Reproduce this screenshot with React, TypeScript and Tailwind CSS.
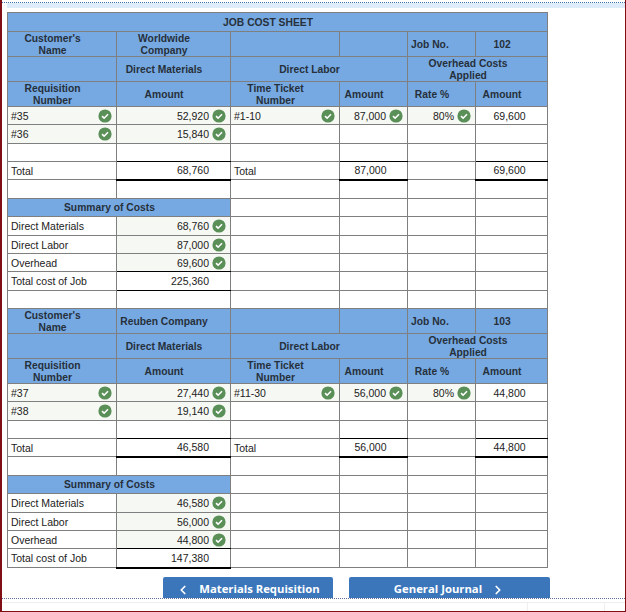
import { ChevronLeft, ChevronRight } from 'lucide-react';

const line = 'border border-[#7f7f7f]';
const head = `${line} bg-[#76a9e2] text-center text-[10.3px] leading-[11.5px] font-bold text-[#26303b] align-middle p-0 pt-[1px] pr-[19px]`;
const cell = `${line} text-[10.5px] leading-[12px] text-[#222] align-middle p-0`;
const tinted = 'bg-[#f6f8f3]';

function Check() {
  return (
    <svg width="14" height="14" viewBox="0 0 14 14" className="shrink-0">
      <circle cx="7" cy="7" r="6.6" fill="#5a8f58" />
      <path d="M4 7.2l2.1 2 3.9-3.9" fill="none" stroke="#fff" strokeWidth="1.6" />
    </svg>
  );
}

function Num({ v, ok, cls = '' }: { v?: string; ok?: boolean; cls?: string }) {
  return (
    <td className={`${cell} ${ok ? tinted : ''} ${cls}`}>
      <div className="flex items-center justify-end gap-[3px] pr-[4px]">
        <span>{v}</span>
        {ok ? <Check /> : <span className="w-[14px]" />}
      </div>
    </td>
  );
}

function Label({ v, ok }: { v?: string; ok?: boolean }) {
  return (
    <td className={`${cell} ${ok ? tinted : ''}`}>
      <div className="flex items-center justify-between pl-[3px] pr-[4px]">
        <span>{v}</span>
        {ok && <Check />}
      </div>
    </td>
  );
}

function Text({ v }: { v?: string }) {
  return <td className={`${cell} pl-[3px]`}>{v}</td>;
}

// in a collapsed table the upper cell wins a tie, so the 1px black rule sits on the row above
const ruleAbove = 'border-b-black';
const thick = 'border-b-2 border-b-black';

type Job = {
  company: string;
  jobNo: string;
  reqs: [string, string][];
  matTotal: string;
  ticket: string;
  labor: string;
  overhead: string;
  summaryTotal: string;
  spacer: boolean;
};

function JobRows({ job }: { job: Job }) {
  return (
    <>
      <tr className="h-[25px]">
        <td className={head}>
          Customer's
          <br />
          Name
        </td>
        <td className={head}>{job.company}</td>
        <td className={head} />
        <td className={head} />
        <td className={`${head} text-left pl-[3px]`}>Job No.</td>
        <td className={head}>{job.jobNo}</td>
      </tr>
      <tr className="h-[25px]">
        <td className={head} />
        <td className={head}>Direct Materials</td>
        <td className={head} colSpan={2}>
          Direct Labor
        </td>
        <td className={head} colSpan={2}>
          Overhead Costs
          <br />
          Applied
        </td>
      </tr>
      <tr className="h-[25px]">
        <td className={head}>
          Requisition
          <br />
          Number
        </td>
        <td className={head}>Amount</td>
        <td className={head}>
          Time Ticket
          <br />
          Number
        </td>
        <td className={head}>Amount</td>
        <td className={head}>Rate %</td>
        <td className={head}>Amount</td>
      </tr>
      <tr className="h-[18px]">
        <Label v={job.reqs[0][0]} ok />
        <Num v={job.reqs[0][1]} ok />
        <Label v={job.ticket} ok />
        <Num v={job.labor} ok />
        <Num v="80%" ok />
        <td className={`${cell} text-center pr-[4px]`}>{job.overhead}</td>
      </tr>
      <tr className="h-[19px]">
        <Label v={job.reqs[1][0]} ok />
        <Num v={job.reqs[1][1]} ok />
        <td className={cell} />
        <td className={cell} />
        <td className={cell} />
        <td className={cell} />
      </tr>
      <tr className="h-[18px]">
        <td className={cell} />
        <td className={`${cell} ${ruleAbove}`} />
        <td className={cell} />
        <td className={`${cell} ${ruleAbove}`} />
        <td className={cell} />
        <td className={`${cell} ${ruleAbove}`} />
      </tr>
      <tr className="h-[18px]">
        <Text v="Total" />
        <Num v={job.matTotal} cls={thick} />
        <Text v="Total" />
        <td className={`${cell} ${thick} text-center pr-[6px]`}>{job.labor}</td>
        <td className={cell} />
        <td className={`${cell} ${thick} text-center pr-[4px]`}>{job.overhead}</td>
      </tr>
      <tr className="h-[19px]">
        {Array.from({ length: 6 }).map((_, i) => (
          <td key={i} className={cell} />
        ))}
      </tr>
      <tr className="h-[18px]">
        <td className={head} colSpan={2}>
          Summary of Costs
        </td>
        <td className={cell} />
        <td className={cell} />
        <td className={cell} />
        <td className={cell} />
      </tr>
      {[
        ['Direct Materials', job.matTotal, 'h-[19px]', ''],
        ['Direct Labor', job.labor, 'h-[18px]', ''],
        ['Overhead', job.overhead, 'h-[18px]', ruleAbove],
      ].map(([label, value, h, rule]) => (
        <tr key={label} className={h}>
          <Text v={label} />
          <Num v={value} ok cls={rule} />
          <td className={cell} />
          <td className={cell} />
          <td className={cell} />
          <td className={cell} />
        </tr>
      ))}
      <tr className="h-[19px]">
        <Text v="Total cost of Job" />
        <Num v={job.summaryTotal} cls={job.spacer ? ruleAbove : thick} />
        <td className={cell} />
        <td className={cell} />
        <td className={cell} />
        <td className={cell} />
      </tr>
      {job.spacer && (
        <tr className="h-[18px]">
          {Array.from({ length: 6 }).map((_, i) => (
            <td key={i} className={cell} />
          ))}
        </tr>
      )}
    </>
  );
}

const jobs: Job[] = [
  {
    company: 'Worldwide Company',
    jobNo: '102',
    reqs: [
      ['#35', '52,920'],
      ['#36', '15,840'],
    ],
    matTotal: '68,760',
    ticket: '#1-10',
    labor: '87,000',
    overhead: '69,600',
    summaryTotal: '225,360',
    spacer: true,
  },
  {
    company: 'Reuben Company',
    jobNo: '103',
    reqs: [
      ['#37', '27,440'],
      ['#38', '19,140'],
    ],
    matTotal: '46,580',
    ticket: '#11-30',
    labor: '56,000',
    overhead: '44,800',
    summaryTotal: '147,380',
    spacer: false,
  },
];

export default function App() {
  return (
    <div className="w-[626px] h-[612px] overflow-hidden bg-white border-l-2 border-r border-b border-[#7f0f14] font-['Liberation_Sans',Arial,sans-serif] flex flex-col">
      <div className="h-[3px] border-b border-dotted border-[#3f6fb0]" />
      <div className="h-[5px] ml-[5px] bg-[#deedf9]" />
      <div className="pl-[5px] pt-[4px]">
        <table className="w-[540px] table-fixed border-collapse">
          <colgroup>
            <col className="w-[109px]" />
            <col className="w-[114px]" />
            <col className="w-[109px]" />
            <col className="w-[68px]" />
            <col className="w-[68px]" />
            <col className="w-[72px]" />
          </colgroup>
          <tbody>
            <tr className="h-[19px]">
              <td className={head} colSpan={6}>
                JOB COST SHEET
              </td>
            </tr>
            {jobs.map((job) => (
              <JobRows key={job.jobNo} job={job} />
            ))}
          </tbody>
        </table>
      </div>
      <div className="flex gap-[16px] pl-[161px] mt-[8px] h-[21px] overflow-hidden">
        <button className="shrink-0 w-[170px] h-[26px] rounded-t-[2px] bg-[#3b76bb] text-white text-[11.3px] font-bold font-['Open_Sans',sans-serif] flex items-center justify-center gap-[9px]">
          <ChevronLeft size={14} strokeWidth={3} />
          Materials Requisition
        </button>
        <button className="shrink-0 w-[201px] h-[26px] rounded-t-[2px] bg-[#3b76bb] text-white text-[11.3px] font-bold font-['Open_Sans',sans-serif] flex items-center justify-center gap-[9px]">
          General Journal
          <ChevronRight size={14} strokeWidth={3} />
        </button>
      </div>
      <div className="border-t border-dotted border-[#5c6f96]" />
      <div className="mt-[3px] flex-1 flex justify-end border-t border-[#eeeeee] pr-[20px]">
        <div className="w-[78px] border-x border-[#f0f0f0]" />
      </div>
    </div>
  );
}
